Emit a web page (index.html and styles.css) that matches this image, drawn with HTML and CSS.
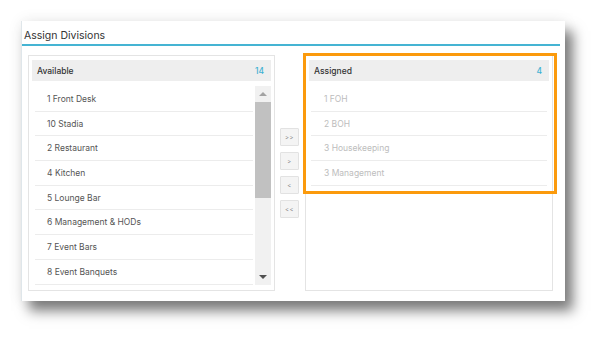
FILE: index.html
```html
<!DOCTYPE html>
<html lang="en">
<head>
  <meta charset="UTF-8" />
  <title>Assign Divisions</title>
  <link rel="stylesheet" href="styles.css">
</head>
<body>
  <div class="panel">
    <div class="panel-title">Assign Divisions</div>
    <div class="panel-body">
      <div class="list-box">
        <div class="list-head">
          <span>Available</span>
          <span class="count">14</span>
        </div>
        <div class="list-scroll">
          <ul class="items">
            <li>1 Front Desk</li>
            <li>10 Stadia</li>
            <li>2 Restaurant</li>
            <li>4 Kitchen</li>
            <li>5 Lounge Bar</li>
            <li>6 Management &amp; HODs</li>
            <li>7 Event Bars</li>
            <li>8 Event Banquets</li>
          </ul>
          <div class="scrollbar">
            <div class="arrow up"></div>
            <div class="track"><div class="thumb"></div></div>
            <div class="arrow down"></div>
          </div>
        </div>
      </div>

      <div class="move-buttons">
        <button class="move-btn">&gt;&gt;</button>
        <button class="move-btn">&gt;</button>
        <button class="move-btn">&lt;</button>
        <button class="move-btn">&lt;&lt;</button>
      </div>

      <div class="list-box assigned">
        <div class="list-head">
          <span>Assigned</span>
          <span class="count">4</span>
        </div>
        <ul class="items muted">
          <li>1 FOH</li>
          <li>2 BOH</li>
          <li>3 Housekeeping</li>
          <li>3 Management</li>
        </ul>
        <div class="highlight"></div>
      </div>
    </div>
  </div>
</body>
</html>
```

FILE: styles.css
```css
* {
  margin: 0;
  padding: 0;
  box-sizing: border-box;
  font-family: 'Inter', 'Liberation Sans', Arial, sans-serif;
}

html, body {
  min-height: 344px;
}

body {
  background: #fff;
  padding: 21px 0 0 21px;
}

.panel {
  width: 544px;
  height: 280px;
  background: #fff;
  border-left: 1px solid #dfe6ea;
  box-shadow: 0 0 14px rgba(0, 0, 0, 0.08), 8px 10px 12px rgba(0, 0, 0, 0.5);
}

.panel-title {
  height: 25px;
  margin-right: 5px;
  padding: 8px 0 0 2px;
  font-size: 10.5px;
  color: #333;
  border-bottom: 2px solid #45b4d3;
}

.panel-body {
  display: flex;
  align-items: center;
  padding: 9px 0 0 6px;
}

.list-box {
  position: relative;
  width: 247px;
  height: 236px;
  border: 1px solid #e4e4e4;
  padding: 4px 3px 0 3px;
}

.list-head {
  height: 21px;
  background: #eeeeee;
  display: flex;
  justify-content: space-between;
  align-items: center;
  padding: 0 7px 0 5px;
  font-size: 8.5px;
  font-weight: 500;
  color: #333;
}

.count {
  color: #3fb1d2;
}

.list-scroll {
  display: flex;
  margin-top: 5px;
}

.items {
  list-style: none;
  flex: 1;
  margin-left: 3px;
  margin-top: 1px;
}

.items li {
  height: 24.7px;
  line-height: 25px;
  padding-left: 12px;
  font-size: 8.5px;
  color: #555;
  border-bottom: 1px solid #ececec;
}

.scrollbar {
  width: 16px;
  height: 199px;
  margin-left: 2px;
  background: #f1f1f1;
  display: flex;
  flex-direction: column;
}

.arrow {
  height: 16px;
  position: relative;
}

.arrow::after {
  content: '';
  position: absolute;
  left: 4px;
  top: 6px;
  border-left: 4px solid transparent;
  border-right: 4px solid transparent;
}

.arrow.up::after {
  border-bottom: 4px solid #a3a3a3;
}

.arrow.down::after {
  border-top: 4px solid #505050;
}

.track {
  flex: 1;
}

.thumb {
  height: 96px;
  background: #c1c1c1;
}

.move-buttons {
  width: 30px;
  display: flex;
  flex-direction: column;
  align-items: center;
  gap: 6px;
  padding-right: 1px;
}

.move-btn {
  width: 19px;
  height: 18px;
  background: #f4f4f4;
  border: 1px solid #e2e2e2;
  border-radius: 1px;
  font-size: 6px;
  letter-spacing: 0.5px;
  color: #888;
}

.assigned {
  width: 248px;
}

.assigned .items {
  margin-left: 2px;
  margin-right: 2px;
  margin-top: 6px;
}

.assigned .items li {
  padding-left: 13px;
}

.items.muted li {
  color: #bdbdbd;
}

.highlight {
  position: absolute;
  left: -3px;
  top: -3px;
  width: 254px;
  height: 141px;
  border: 3px solid #fb9a0c;
}
```
